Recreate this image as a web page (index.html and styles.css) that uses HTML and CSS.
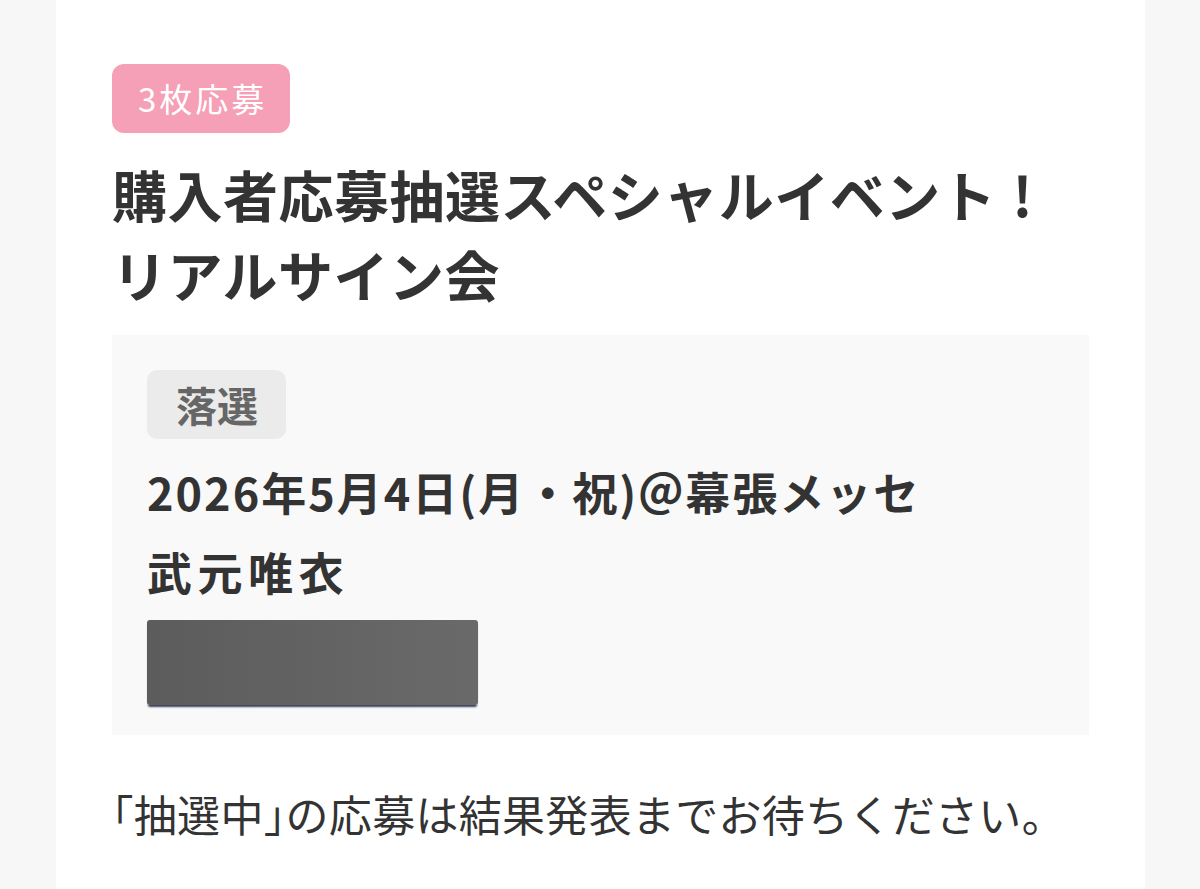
FILE: index.html
```html
<!DOCTYPE html>
<html lang="ja">
<head>
<meta charset="utf-8">
<link rel="stylesheet" href="styles.css">
</head>
<body>
<main class="card">
  <span class="tag">3枚応募</span>
  <h1 class="title">購入者応募抽選スペシャルイベント<span class="excl">!</span><br>リアルサイン会</h1>
  <section class="entry">
    <span class="status">落選</span>
    <p class="line date">2026年5月4日(月・祝)＠幕張メッセ</p>
    <p class="line name">武元唯衣</p>
    <div class="redact"></div>
  </section>
  <p class="note"><span class="bracket">「</span>抽選中<span class="bracket">」</span>の応募は結果発表までお待ちください。</p>
</main>
</body>
</html>
```
FILE: styles.css
```css
html, body {
  margin: 0;
  padding: 0;
  background: #f7f7f7;
  font-family: "Noto Sans CJK JP", "Noto Sans", sans-serif;
  color: #333;
}
.card {
  margin: 0 55px 0 56px;
  background: #fff;
  height: 889px;
  box-sizing: border-box;
  padding: 64px 56px 0;
}
.tag {
  display: inline-block;
  height: 69px;
  line-height: 69px;
  padding: 0 23px 0 26px;
  border-radius: 12px;
  background: #f5a0b6;
  color: #fff;
  font-size: 33px;
  font-weight: 400;
  letter-spacing: 3px;
}
.title {
  margin: 20px 0 0;
  font-size: 55px;
  line-height: 80px;
  font-weight: 700;
  letter-spacing: 0.5px;
}
.excl {
  margin-left: 16px;
}
.entry {
  margin-top: 22px;
  background: #f9f9f9;
  padding: 35px 35px 30px;
}
.status {
  display: inline-block;
  height: 69px;
  line-height: 69px;
  padding: 0 28px 0 29px;
  border-radius: 10px;
  background: #ebebeb;
  color: #666;
  font-size: 41px;
  font-weight: 700;
}
.line {
  margin: 0;
  font-size: 45px;
  line-height: 80px;
  font-weight: 700;
}
.date { letter-spacing: 2px; }
.name { letter-spacing: 5.5px; }
.status + .line { margin-top: 13px; }
.redact {
  margin-top: 8px;
  width: 331px;
  height: 85px;
  border-radius: 3px;
  background: linear-gradient(90deg, #5c5c5c, #646464 60%, #6a6a6a);
  box-shadow: 0 3px 2px -1px #3a3f5a;
}
.note {
  margin: 48px 0 0;
  font-size: 43px;
  line-height: 60px;
  font-weight: 400;
  letter-spacing: 0.3px;
}
.bracket {
  font-feature-settings: "halt" 1;
}
```
